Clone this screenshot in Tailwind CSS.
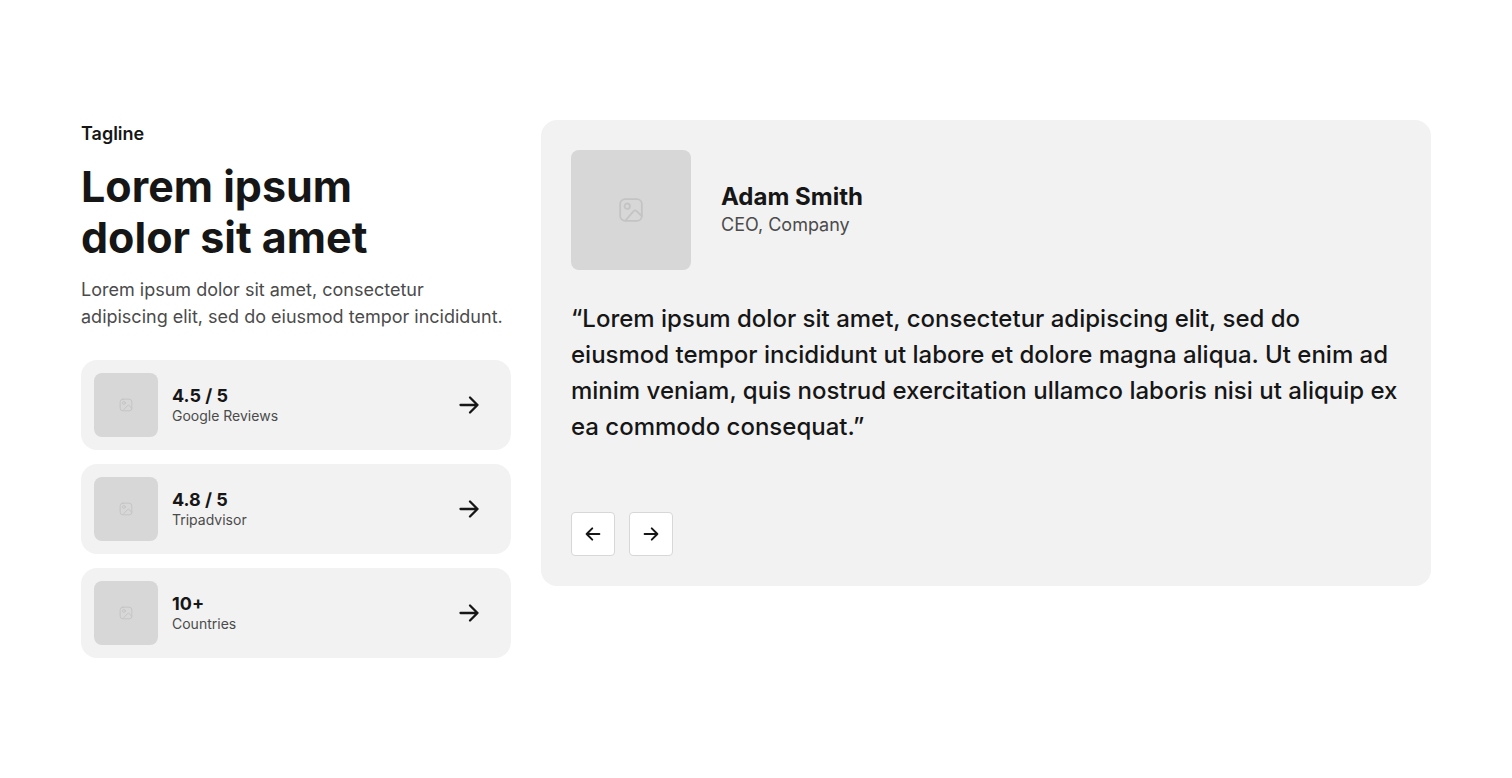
<!doctype html>
<html lang="en">
<head>
    <meta charset="UTF-8">
    <meta name="viewport" content="width=device-width, initial-scale=1.0">
    <title>Testimonials</title>
    <script src="https://cdn.jsdelivr.net/npm/@tailwindcss/browser@4"></script>
</head>
<body class="bg-white font-['Inter',sans-serif] text-[#161616] antialiased">
    <!-- Shared icons -->
    <svg class="hidden" aria-hidden="true">
        <symbol id="arrow-right" viewBox="0 0 24 24" fill="none" stroke="currentColor" stroke-linecap="round" stroke-linejoin="round">
            <path d="M3.5 12h17M13 4.5l7.5 7.5-7.5 7.5" />
        </symbol>
        <symbol id="arrow-left" viewBox="0 0 24 24" fill="none" stroke="currentColor" stroke-linecap="round" stroke-linejoin="round">
            <path d="M20.5 12h-17M11 4.5L3.5 12l7.5 7.5" />
        </symbol>
        <symbol id="image" viewBox="0 0 24 24" fill="none" stroke="currentColor" stroke-linecap="round" stroke-linejoin="round">
            <rect x="2" y="2" width="20" height="20" rx="4.5" />
            <circle cx="8.5" cy="8.5" r="2.5" />
            <path d="M7 21.5l7.6-8.6a1.6 1.6 0 0 1 2.3-.1L22 17.5" />
        </symbol>
    </svg>

    <section class="px-6 py-[120px]">
        <div class="mx-auto grid max-w-[1350px] items-start gap-[30px] lg:grid-cols-[430px_1fr]">
            <div>
                <p class="text-[18px] leading-[27px] font-semibold">Tagline</p>
                <h2 class="mt-[14px] max-w-[360px] text-[43px] leading-[51px] font-bold">Lorem ipsum dolor sit amet</h2>
                <p class="mt-[13px] text-[18px] leading-[27px] text-[#4b4b4b]">Lorem ipsum dolor sit amet, consectetur adipiscing elit, sed do eiusmod tempor incididunt.</p>

                <div class="mt-[30px] grid gap-[14px]">
                    <a href="#" class="flex items-center gap-[14px] rounded-2xl bg-[#f2f2f2] py-[13px] pr-[30px] pl-[13px]">
                        <span class="flex size-16 items-center justify-center rounded-lg bg-[#d7d7d7] text-[#c4c4c4]">
                            <svg class="size-[14px] stroke-[1.7]"><use href="#image" /></svg>
                        </span>
                        <span class="flex-1">
                            <span class="block text-[18px] leading-[22px] font-bold">4.5 / 5</span>
                            <span class="block text-[14px] leading-[18px] text-[#4b4b4b]">Google Reviews</span>
                        </span>
                        <svg class="size-6 stroke-[2.3]"><use href="#arrow-right" /></svg>
                    </a>
                    <a href="#" class="flex items-center gap-[14px] rounded-2xl bg-[#f2f2f2] py-[13px] pr-[30px] pl-[13px]">
                        <span class="flex size-16 items-center justify-center rounded-lg bg-[#d7d7d7] text-[#c4c4c4]">
                            <svg class="size-[14px] stroke-[1.7]"><use href="#image" /></svg>
                        </span>
                        <span class="flex-1">
                            <span class="block text-[18px] leading-[22px] font-bold">4.8 / 5</span>
                            <span class="block text-[14px] leading-[18px] text-[#4b4b4b]">Tripadvisor</span>
                        </span>
                        <svg class="size-6 stroke-[2.3]"><use href="#arrow-right" /></svg>
                    </a>
                    <a href="#" class="flex items-center gap-[14px] rounded-2xl bg-[#f2f2f2] py-[13px] pr-[30px] pl-[13px]">
                        <span class="flex size-16 items-center justify-center rounded-lg bg-[#d7d7d7] text-[#c4c4c4]">
                            <svg class="size-[14px] stroke-[1.7]"><use href="#image" /></svg>
                        </span>
                        <span class="flex-1">
                            <span class="block text-[18px] leading-[22px] font-bold">10+</span>
                            <span class="block text-[14px] leading-[18px] text-[#4b4b4b]">Countries</span>
                        </span>
                        <svg class="size-6 stroke-[2.3]"><use href="#arrow-right" /></svg>
                    </a>
                </div>
            </div>

            <figure class="rounded-2xl bg-[#f2f2f2] p-[30px]">
                <figcaption class="flex items-center gap-[30px]">
                    <div class="flex size-[120px] items-center justify-center rounded-lg bg-[#d7d7d7] text-[#c4c4c4]">
                        <svg class="size-[26px] stroke-[1.7]"><use href="#image" /></svg>
                    </div>
                    <div>
                        <p class="text-[24px] leading-[29px] font-bold">Adam Smith</p>
                        <p class="text-[18px] leading-[27px] text-[#4b4b4b]">CEO, Company</p>
                    </div>
                </figcaption>
                <blockquote class="mt-[31px] text-[24px] leading-[36px] font-medium">“Lorem ipsum dolor sit amet, consectetur adipiscing elit, sed do eiusmod tempor incididunt ut labore et dolore magna aliqua. Ut enim ad minim veniam, quis nostrud exercitation ullamco laboris nisi ut aliquip ex ea commodo consequat.”</blockquote>
                <div class="mt-[67px] flex gap-[14px]">
                    <button type="button" aria-label="Previous" class="flex size-[44px] items-center justify-center rounded border border-[#d7d7d7] bg-white">
                        <svg class="size-[18px] stroke-[2.6]"><use href="#arrow-left" /></svg>
                    </button>
                    <button type="button" aria-label="Next" class="flex size-[44px] items-center justify-center rounded border border-[#d7d7d7] bg-white">
                        <svg class="size-[18px] stroke-[2.6]"><use href="#arrow-right" /></svg>
                    </button>
                </div>
            </figure>
        </div>
    </section>
</body>
</html>
